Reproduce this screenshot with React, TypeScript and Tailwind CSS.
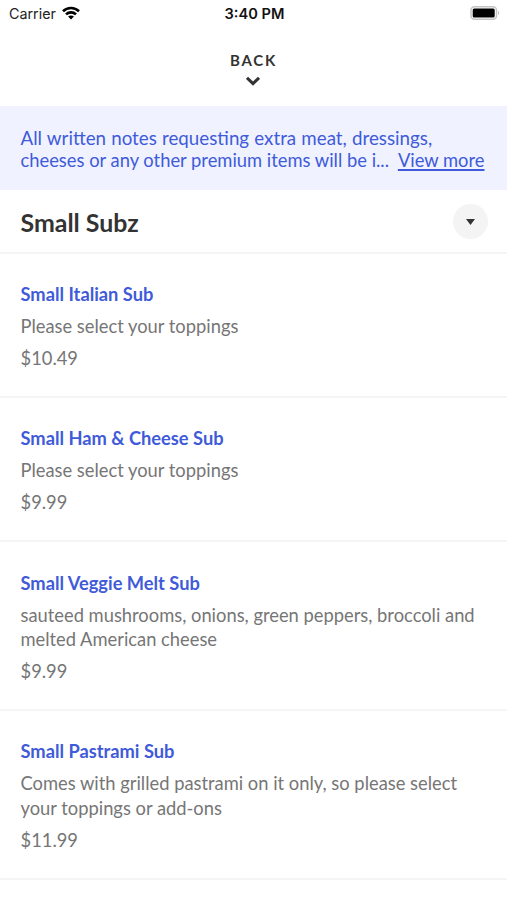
type MenuItem = { name: string; lines: string[]; price: string };

const items: MenuItem[] = [
  { name: "Small Italian Sub", lines: ["Please select your toppings"], price: "$10.49" },
  { name: "Small Ham & Cheese Sub", lines: ["Please select your toppings"], price: "$9.99" },
  {
    name: "Small Veggie Melt Sub",
    lines: ["sauteed mushrooms, onions, green peppers, broccoli and", "melted American cheese"],
    price: "$9.99",
  },
  {
    name: "Small Pastrami Sub",
    lines: ["Comes with grilled pastrami on it only, so please select", "your toppings or add-ons"],
    price: "$11.99",
  },
];

function StatusBar() {
  return (
    <div className="grid h-[27px] grid-cols-3 items-center pl-[9px] pr-[7px] font-['Inter',sans-serif] text-[14.3px] text-black">
      <div className="flex items-center gap-[6px]">
        <span className="text-[#222]">Carrier</span>
        <svg className="-mt-px h-[14px] w-[18px]" viewBox="0 0 18 14" fill="none" stroke="currentColor" strokeWidth="2.6">
          <path d="M1 5.2C5.5 .9 12.5 .9 17 5.2" />
          <path d="M4 8.4C6.8 5.7 11.2 5.7 14 8.4" />
          <path d="M9 13.4L6.1 10.5C7.7 9 10.3 9 11.9 10.5Z" fill="currentColor" stroke="none" />
        </svg>
      </div>
      <span className="pt-[2px] text-center text-[14.6px] font-semibold text-[#111]">3:40 PM</span>
      <svg className="-mt-px h-[14px] w-[30px] justify-self-end" viewBox="0 0 30 14">
        <rect x="1" y=".8" width="25.5" height="12.4" rx="3.5" fill="none" stroke="#c4c4c4" strokeWidth="1.5" />
        <rect x="2.7" y="2.6" width="22" height="8.8" rx="1.5" fill="#000" />
        <path d="M28 4.8Q30.5 7 28 9.2Z" fill="#c4c4c4" />
      </svg>
    </div>
  );
}

function MenuRow({ item }: { item: MenuItem }) {
  return (
    <li className="border-b-2 border-[#f5f5f5] px-[20.5px] pb-[25px] pt-[28.6px]">
      <h2 className="text-[18.28px] font-bold leading-[25px] text-[#3f5bd9]">{item.name}</h2>
      <p className="mt-[7px] text-[18.33px] leading-[24.5px] text-[#767676]">
        {item.lines.map((line) => (
          <span key={line} className="block whitespace-nowrap">
            {line}
          </span>
        ))}
      </p>
      <p className="mt-[7.2px] text-[18.33px] leading-[25px] text-[#767676]">{item.price}</p>
    </li>
  );
}

export default function App() {
  return (
    <div className="h-[900px] overflow-hidden bg-white font-['Lato',sans-serif]">
      <StatusBar />
      <button className="flex h-[79px] w-full flex-col items-center pt-[23px] text-[#333]">
        <span className="text-[15px] font-bold leading-5 tracking-[1.75px]">BACK</span>
        <svg className="mt-[6px] mr-[1px] h-[10px] w-[14px]" viewBox="0 0 14 10" fill="none" stroke="currentColor" strokeWidth="3">
          <path d="M1 1.8L7 7.6L13 1.8" />
        </svg>
      </button>
      <div className="h-[84px] bg-[#f0f2ff] px-[20.5px] pt-[21px] text-[18.35px] leading-[22px] text-[#3f5bd9]">
        <p className="whitespace-nowrap text-[18.75px] leading-[22px] [word-spacing:0.4px]">
          All written notes requesting extra meat, dressings,
        </p>
        <div className="flex justify-between whitespace-nowrap pr-[2px]">
          <span>cheeses or any other premium items will be i...</span>
          <a className="underline decoration-[1.5px] underline-offset-2">View more</a>
        </div>
      </div>
      <div className="flex h-[63.5px] items-center justify-between border-b-2 border-[#f5f5f5] pl-[20.5px] pr-[19px]">
        <h1 className="pt-[3px] text-[24.9px] font-bold text-[#333]">Small Subz</h1>
        <button className="mt-[2px] flex size-[35px] items-center justify-center rounded-full bg-[#f4f4f4]">
          <svg className="h-[6px] w-[9px]" viewBox="0 0 9 6" fill="#333">
            <path d="M0 0H9L4.5 6Z" />
          </svg>
        </button>
      </div>
      <ul>
        {items.map((item) => (
          <MenuRow key={item.name} item={item} />
        ))}
      </ul>
    </div>
  );
}
